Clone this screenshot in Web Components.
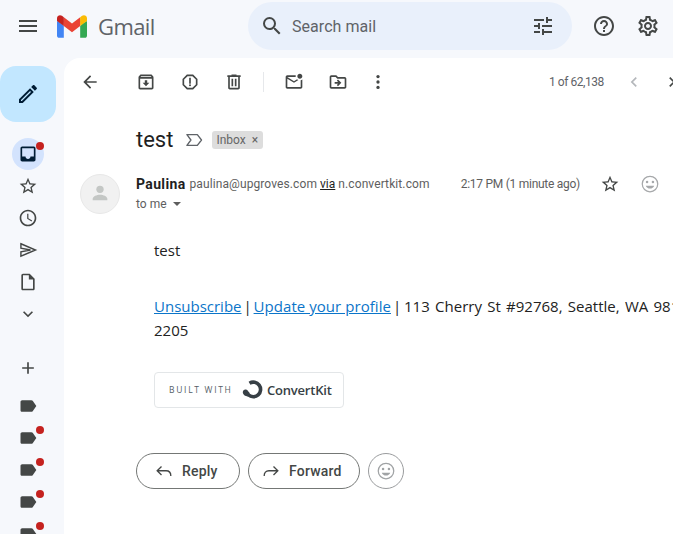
<!DOCTYPE html>
<html lang="en">
<head>
<meta charset="utf-8">
<title>Gmail</title>
<style>
  html, body { margin: 0; height: 100%; overflow: hidden; background: #f6f8fc; }
</style>
</head>
<body>
<gm-app>
  <gm-header slot="header"></gm-header>
  <gm-rail slot="rail"></gm-rail>
  <gm-toolbar slot="main"></gm-toolbar>
  <gm-message slot="main"></gm-message>
</gm-app>

<script>
const ICONS = {
  menu: '<path d="M3 18h18v-2H3v2zm0-5h18v-2H3v2zm0-7v2h18V6H3z"/>',
  search: '<path d="M15.5 14h-.79l-.28-.27A6.471 6.471 0 0 0 16 9.5 6.5 6.5 0 1 0 9.5 16c1.61 0 3.09-.59 4.23-1.57l.27.28v.79l5 4.99L20.49 19l-4.99-5zm-6 0C7.01 14 5 11.99 5 9.5S7.01 5 9.5 5 14 7.01 14 9.5 11.99 14 9.5 14z"/>',
  tune: '<path d="M3 17v2h6v-2H3zM3 5v2h10V5H3zm10 16v-2h8v-2h-8v-2h-2v6h2zM7 9v2H3v2h4v2h2V9H7zm14 4v-2H11v2h10zm-6-4h2V7h4V5h-4V3h-2v6z"/>',
  help: '<path d="M11 18h2v-2h-2v2zm1-16C6.48 2 2 6.48 2 12s4.48 10 10 10 10-4.48 10-10S17.52 2 12 2zm0 18c-4.41 0-8-3.59-8-8s3.59-8 8-8 8 3.59 8 8-3.59 8-8 8zm0-14c-2.21 0-4 1.79-4 4h2c0-1.1.9-2 2-2s2 .9 2 2c0 2-3 1.75-3 5h2c0-2.25 3-2.5 3-5 0-2.21-1.79-4-4-4z"/>',
  settings: '<path d="M19.43 12.98c.04-.32.07-.64.07-.98 0-.34-.03-.66-.07-.98l2.11-1.65c.19-.15.24-.42.12-.64l-2-3.46c-.09-.16-.26-.25-.44-.25-.06 0-.12.01-.17.03l-2.49 1c-.52-.4-1.08-.73-1.69-.98l-.38-2.65C14.46 2.18 14.25 2 14 2h-4c-.25 0-.46.18-.49.42l-.38 2.65c-.61.25-1.17.59-1.69.98l-2.49-1c-.06-.02-.12-.03-.18-.03-.17 0-.34.09-.43.25l-2 3.46c-.13.22-.07.49.12.64l2.11 1.65c-.04.32-.07.65-.07.98 0 .33.03.66.07.98l-2.11 1.65c-.19.15-.24.42-.12.64l2 3.46c.09.16.26.25.44.25.06 0 .12-.01.17-.03l2.49-1c.52.4 1.08.73 1.69.98l.38 2.65c.03.24.24.42.49.42h4c.25 0 .46-.18.49-.42l.38-2.65c.61-.25 1.17-.59 1.69-.98l2.49 1c.06.02.12.03.18.03.17 0 .34-.09.43-.25l2-3.46c.12-.22.07-.49-.12-.64l-2.11-1.65zm-1.98-1.71c.04.31.05.52.05.73 0 .21-.02.43-.05.73l-.14 1.13.89.7 1.08.84-.7 1.21-1.27-.51-1.04-.42-.9.68c-.43.32-.84.56-1.25.73l-1.06.43-.16 1.13-.2 1.35h-1.4l-.19-1.35-.16-1.13-1.06-.43c-.43-.18-.83-.41-1.23-.71l-.91-.7-1.06.43-1.27.51-.7-1.21 1.08-.84.89-.7-.14-1.13c-.03-.31-.05-.54-.05-.74s.02-.43.05-.73l.14-1.13-.89-.7-1.08-.84.7-1.21 1.27.51 1.04.42.9-.68c.43-.32.84-.56 1.25-.73l1.06-.43.16-1.13.2-1.35h1.39l.19 1.35.16 1.13 1.06.43c.43.18.83.41 1.23.71l.91.7 1.06-.43 1.27-.51.7 1.21-1.07.85-.89.7.14 1.13zM12 8c-2.21 0-4 1.79-4 4s1.79 4 4 4 4-1.79 4-4-1.79-4-4-4zm0 6c-1.1 0-2-.9-2-2s.9-2 2-2 2 .9 2 2-.9 2-2 2z"/>',
  back: '<path d="M20 11H7.83l5.59-5.59L12 4l-8 8 8 8 1.41-1.41L7.83 13H20v-2z"/>',
  archive: '<path d="M20.54 5.23l-1.39-1.68C18.88 3.21 18.47 3 18 3H6c-.47 0-.88.21-1.16.55L3.46 5.23C3.17 5.57 3 6.02 3 6.5V19c0 1.1.9 2 2 2h14c1.1 0 2-.9 2-2V6.5c0-.48-.17-.93-.46-1.27zM6.24 5h11.52l.81.97H5.44l.8-.97zM5 19V8h14v11H5zm8.45-9h-2.9v3H8l4 4 4-4h-2.55z"/>',
  report: '<path d="M15.73 3H8.27L3 8.27v7.46L8.27 21h7.46L21 15.73V8.27L15.73 3zM19 14.9L14.9 19H9.1L5 14.9V9.1L9.1 5h5.8L19 9.1v5.8z"/><circle cx="12" cy="16" r="1.2"/><path d="M11 7h2v7h-2z"/>',
  trash: '<path d="M15 4V3H9v1H4v2h1v13c0 1.1.9 2 2 2h10c1.1 0 2-.9 2-2V6h1V4h-5zm2 15H7V6h10v13zM9 8h2v9H9zm4 0h2v9h-2z"/>',
  unread: '<path d="M22 8.98V18c0 1.1-.9 2-2 2H4c-1.1 0-2-.9-2-2V6c0-1.1.9-2 2-2h10.1c-.06.32-.1.66-.1 1 0 .34.04.68.1 1H4l8 5 3.67-2.29c.47.43 1.02.76 1.63.98L12 13 4 8v10h16V9.9c.74-.15 1.42-.48 2-.92zM16 5c0 1.66 1.34 3 3 3s3-1.34 3-3-1.34-3-3-3-3 1.34-3 3z"/>',
  move: '<path d="M20 6h-8l-2-2H4c-1.1 0-2 .9-2 2v12c0 1.1.9 2 2 2h16c1.1 0 2-.9 2-2V8c0-1.1-.9-2-2-2zm0 12H4V6h5.17l2 2H20v10zm-8.01-9l-1.41 1.41L12.16 12H8v2h4.16l-1.59 1.59L11.99 17 16 13.01 11.99 9z"/>',
  more: '<circle cx="12" cy="5.5" r="2"/><circle cx="12" cy="12" r="2"/><circle cx="12" cy="18.5" r="2"/>',
  left: '<path d="M15.41 7.41 14 6l-6 6 6 6 1.41-1.41L10.83 12z"/>',
  right: '<path d="M8.59 16.59 10 18l6-6-6-6-1.41 1.41L13.17 12z"/>',
  star: '<path d="M22 9.24l-7.19-.62L12 2 9.19 8.63 2 9.24l5.46 4.73L5.82 21 12 17.27 18.18 21l-1.63-7.03L22 9.24zM12 15.4l-3.76 2.27 1-4.28-3.32-2.88 4.38-.38L12 6.1l1.71 4.04 4.38.38-3.32 2.88 1 4.28L12 15.4z"/>',
  clock: '<path d="M11.99 2C6.47 2 2 6.48 2 12s4.47 10 9.99 10C17.52 22 22 17.52 22 12S17.52 2 11.99 2zM12 20c-4.42 0-8-3.58-8-8s3.58-8 8-8 8 3.58 8 8-3.58 8-8 8zm.5-13H11v6l5.25 3.15.75-1.23-4.5-2.67z"/>',
  send: '<path d="M3.500 4.500 21 12 3.500 19.500V14.200L15 12 3.500 9.800z" fill="none" stroke="currentColor" stroke-width="1.700" stroke-linejoin="miter"/>',
  draft: '<path d="M14 2H6c-1.1 0-1.99.9-1.99 2L4 20c0 1.1.89 2 1.99 2H18c1.1 0 2-.9 2-2V8l-6-6zM6 20V4h7v5h5v11H6z"/>',
  inbox: '<path d="M19 3H5c-1.1 0-2 .9-2 2v14c0 1.1.9 2 2 2h14c1.1 0 2-.9 2-2V5c0-1.1-.9-2-2-2zm0 12h-4c0 1.66-1.35 3-3 3s-3-1.34-3-3H4.99V5H19v10z"/>',
  chevdown: '<path d="M16.59 8.59 12 13.17 7.41 8.59 6 10l6 6 6-6z"/>',
  plus: '<path d="M19 13h-6v6h-2v-6H5v-2h6V5h2v6h6v2z"/>',
  label: '<path d="M17.63 5.84C17.27 5.33 16.67 5 16 5L5 5.01C3.9 5.01 3 5.9 3 7v10c0 1.1.9 1.99 2 1.99L16 19c.67 0 1.27-.33 1.63-.84L22 12l-4.37-6.16z"/>',
  pencil: '<path d="M14.06 9.02l.92.92L5.92 19H5v-.92l9.06-9.06M17.66 3c-.25 0-.51.1-.7.29l-1.83 1.83 3.75 3.75 1.83-1.83c.39-.39.39-1.02 0-1.41l-2.34-2.34c-.2-.2-.45-.29-.71-.29zm-3.6 3.19L3 17.25V21h3.75L17.81 9.94l-3.75-3.75z"/>',
  mood: '<circle cx="15.5" cy="9.5" r="1.5"/><circle cx="8.5" cy="9.5" r="1.5"/><circle cx="12" cy="12" r="9.3" fill="none" stroke="currentColor" stroke-width="1.5"/><path d="M12 17.5c2.33 0 4.31-1.46 5.11-3.5H6.89c.8 2.04 2.78 3.5 5.11 3.5z"/>',
  marker: '<path d="M3.500 5.500h12.500l5 6.500-5 6.500H3.500l4.800-6.500z" fill="none" stroke="currentColor" stroke-width="1.6" stroke-linejoin="round"/>',
  reply: '<path d="M9 6.500 3.800 11.700 9 16.800M4 11.700h10.500c3.600 0 5.700 2.200 5.700 6.300" fill="none" stroke="currentColor" stroke-width="1.600"/>',
  forward: '<path d="M15 6.500l5.200 5.200L15 16.800M20 11.700H9.500c-3.600 0-5.700 2.200-5.700 6.300" fill="none" stroke="currentColor" stroke-width="1.600"/>',
  person: '<circle cx="12" cy="8" r="4"/><path d="M12 14c-3.600 0-8 1.800-8 4.400V20h16v-1.600c0-2.600-4.400-4.400-8-4.400z"/>'
};

class GmIcon extends HTMLElement {
  connectedCallback() {
    const size = this.getAttribute('size') || 20;
    this.attachShadow({ mode: 'open' });
    this.shadowRoot.innerHTML = `
      <style>
        :host { display: inline-flex; width: ${size}px; height: ${size}px; flex: none; }
        svg { width: 100%; height: 100%; fill: currentColor; display: block; }
      </style>
      <svg viewBox="0 0 24 24">${ICONS[this.getAttribute('name')]}</svg>
    `;
  }
}
customElements.define('gm-icon', GmIcon);

class GmApp extends HTMLElement {
  connectedCallback() {
    this.attachShadow({ mode: 'open' });
    this.shadowRoot.innerHTML = `
      <style>
        :host {
          display: flex;
          flex-direction: column;
          width: 673px;
          height: 534px;
          overflow: hidden;
          background: #f6f8fc;
          font-family: Roboto, "Liberation Sans", sans-serif;
        }
        .row { display: flex; flex: 1; min-height: 0; }
        .main {
          flex: 1;
          min-width: 0;
          background: #fff;
          border-radius: 16px 0 0 0;
          overflow: hidden;
        }
      </style>
      <slot name="header"></slot>
      <div class="row">
        <slot name="rail"></slot>
        <div class="main"><slot name="main"></slot></div>
      </div>
    `;
  }
}
customElements.define('gm-app', GmApp);

class GmHeader extends HTMLElement {
  connectedCallback() {
    this.attachShadow({ mode: 'open' });
    this.shadowRoot.innerHTML = `
      <style>
        :host {
          display: flex;
          align-items: center;
          box-sizing: border-box;
          height: 58px;
          padding-bottom: 6px;
          flex: none;
          color: #444746;
        }
        .burger { margin-left: 16px; }
        .logo { display: flex; align-items: center; margin-left: 17px; width: 191px; }
        .logo svg { width: 30px; height: 23px; display: block; }
        .logo span { margin-left: 11px; font: 400 22px/1 "Open Sans", Roboto, sans-serif; color: #5f6368; letter-spacing: -.6px; }
        .search {
          display: flex;
          align-items: center;
          width: 324px;
          height: 48px;
          border-radius: 24px;
          background: #e9f0fb;
          box-sizing: border-box;
          padding: 0 17px 0 12px;
        }
        .search .txt { flex: 1; margin-left: 8px; font-size: 16px; color: #5f6368; letter-spacing: .05px; }
        .help { margin-left: 20px; }
        .gear { margin-left: 20px; }
      </style>
      <gm-icon class="burger" name="menu" size="24"></gm-icon>
      <div class="logo">
        <svg viewBox="0 0 256 193">
          <path fill="#4285F4" d="M58.182 192.05V93.14L27.507 65.077 0 49.504v125.091c0 9.658 7.825 17.455 17.455 17.455h40.727z"/>
          <path fill="#34A853" d="M197.818 192.05h40.727c9.658 0 17.455-7.826 17.455-17.455V49.505l-31.156 17.837-27.026 25.798v98.91z"/>
          <path fill="#EA4335" d="M58.182 93.14l-4.174-38.647 4.174-36.989L128 69.868l69.818-52.364 4.67 34.992-4.67 40.644L128 145.504z"/>
          <path fill="#FBBC04" d="M197.818 17.504V93.14L256 49.504V26.231c0-21.585-24.64-33.89-41.89-20.945l-16.292 12.218z"/>
          <path fill="#C5221F" d="M0 49.504l26.759 20.07L58.182 93.14V17.504L41.89 5.286C24.61-7.66 0 4.646 0 26.23v23.273z"/>
        </svg>
        <span>Gmail</span>
      </div>
      <div class="search">
        <gm-icon name="search" size="24"></gm-icon>
        <span class="txt">Search mail</span>
        <gm-icon name="tune" size="24"></gm-icon>
      </div>
      <gm-icon class="help" name="help" size="24"></gm-icon>
      <gm-icon class="gear" name="settings" size="24"></gm-icon>
    `;
  }
}
customElements.define('gm-header', GmHeader);

class GmRailItem extends HTMLElement {
  connectedCallback() {
    this.attachShadow({ mode: 'open' });
    const dot = this.hasAttribute('dot') ? '<i class="dot"></i>' : '';
    this.shadowRoot.innerHTML = `
      <style>
        :host {
          display: flex;
          align-items: center;
          justify-content: center;
          position: relative;
          width: 32px;
          height: 32px;
          margin-left: 12px;
          border-radius: 50%;
          flex: none;
          color: #444746;
        }
        :host([active]) { background: #d3e3fd; color: #001d35; }
        .dot {
          position: absolute;
          top: 4px;
          right: 0;
          width: 8px;
          height: 8px;
          border-radius: 50%;
          background: #c5221f;
        }
      </style>
      <gm-icon name="${this.getAttribute('name')}" size="20"></gm-icon>
      ${dot}
    `;
  }
}
customElements.define('gm-rail-item', GmRailItem);

class GmRail extends HTMLElement {
  connectedCallback() {
    this.attachShadow({ mode: 'open' });
    this.shadowRoot.innerHTML = `
      <style>
        :host {
          display: flex;
          flex-direction: column;
          width: 64px;
          flex: none;
          padding-top: 8px;
          box-sizing: border-box;
          overflow: hidden;
        }
        .compose {
          display: flex;
          align-items: center;
          justify-content: center;
          width: 56px;
          height: 56px;
          flex: none;
          margin-bottom: 16px;
          border-radius: 16px;
          background: #c2e7ff;
          color: #001d35;
        }
        .gap-plus { margin-top: 22px; }
        .gap-label { margin-top: 6px; }
      </style>
      <div class="compose"><gm-icon name="pencil" size="24"></gm-icon></div>
      <gm-rail-item name="inbox" active dot></gm-rail-item>
      <gm-rail-item name="star"></gm-rail-item>
      <gm-rail-item name="clock"></gm-rail-item>
      <gm-rail-item name="send"></gm-rail-item>
      <gm-rail-item name="draft"></gm-rail-item>
      <gm-rail-item name="chevdown"></gm-rail-item>
      <gm-rail-item class="gap-plus" name="plus"></gm-rail-item>
      <gm-rail-item class="gap-label" name="label"></gm-rail-item>
      <gm-rail-item name="label" dot></gm-rail-item>
      <gm-rail-item name="label" dot></gm-rail-item>
      <gm-rail-item name="label" dot></gm-rail-item>
      <gm-rail-item name="label" dot></gm-rail-item>
    `;
  }
}
customElements.define('gm-rail', GmRail);

class GmToolbar extends HTMLElement {
  connectedCallback() {
    this.attachShadow({ mode: 'open' });
    this.shadowRoot.innerHTML = `
      <style>
        :host {
          display: flex;
          align-items: center;
          height: 48px;
          width: 640px;
          color: #444746;
        }
        .btn { display: flex; align-items: center; justify-content: center; width: 44px; height: 40px; flex: none; }
        .back { width: 40px; margin-left: 6px; }
        .archive { margin-left: 14px; }
        .sep { width: 1px; height: 20px; margin: 0 8px 0 7px; background: #e6e8eb; flex: none; }
        .more { width: 36px; }
        .count { margin-left: 153px; font-size: 12px; letter-spacing: -.45px; color: #5f6368; white-space: nowrap; width: 56px; flex: none; }
        .prev { margin-left: 9px; width: 40px; color: #b4b7bb; }
        .next { width: 36px; color: #444746; }
      </style>
      <div class="btn back"><gm-icon name="back" size="20"></gm-icon></div>
      <div class="btn archive"><gm-icon name="archive" size="20"></gm-icon></div>
      <div class="btn"><gm-icon name="report" size="20"></gm-icon></div>
      <div class="btn"><gm-icon name="trash" size="20"></gm-icon></div>
      <div class="sep"></div>
      <div class="btn"><gm-icon name="unread" size="20"></gm-icon></div>
      <div class="btn"><gm-icon name="move" size="20"></gm-icon></div>
      <div class="btn more"><gm-icon name="more" size="20"></gm-icon></div>
      <div class="count">1 of 62,138</div>
      <div class="btn prev"><gm-icon name="left" size="20"></gm-icon></div>
      <div class="btn next"><gm-icon name="right" size="20"></gm-icon></div>
    `;
  }
}
customElements.define('gm-toolbar', GmToolbar);

class GmMessage extends HTMLElement {
  connectedCallback() {
    this.attachShadow({ mode: 'open' });
    this.shadowRoot.innerHTML = `
      <style>
        :host { display: block; color: #1f1f1f; }
        .subject { display: flex; align-items: center; height: 36px; margin: 16px 0 0 72px; }
        .subject h1 { margin: 0; font: 400 22px/28px Roboto, sans-serif; color: #1f1f1f; }
        .marker { margin-left: 11px; color: #5f6368; }
        .chip {
          display: flex;
          align-items: center;
          height: 18px;
          margin-left: 8px;
          padding: 0 5px 0 4px;
          border-radius: 3px;
          background: #dddddd;
          color: #666;
          font-size: 12px;
        }
        .chip b { font-weight: 400; margin-left: 6px; }
        .head { display: flex; margin: 16px 0 0 16px; gap: 16px; height: 40px; }
        .avatar {
          display: flex;
          align-items: flex-end;
          justify-content: center;
          box-sizing: border-box;
          width: 40px;
          height: 40px;
          flex: none;
          border-radius: 50%;
          background: #f1f1f1;
          border: 1px solid #e8e8e8;
          color: #c4c7c5;
          padding-bottom: 9px;
        }
        .meta { flex: 1; min-width: 0; }
        .line { display: flex; align-items: center; height: 20px; font-size: 12px; color: #5e5e5e; white-space: nowrap; }
        .name { font-size: 14px; font-weight: 700; letter-spacing: .35px; color: #1f1f1f; margin-right: 4px; }
        .email { letter-spacing: .1px; }
        .via { color: #1f1f1f; text-decoration: underline; margin: 0 3px 0 3px; }
        .domain { letter-spacing: .1px; }
        .time { margin-left: auto; letter-spacing: -.27px; }
        .star { margin-left: 20px; color: #444746; }
        .react { margin-left: 20px; margin-right: 13px; color: #a6a8aa; }
        .caret {
          width: 0; height: 0;
          margin-left: 6px;
          border: 4px solid transparent;
          border-top: 4px solid #5e5e5e;
          border-bottom: 0;
        }
        .body {
          width: 540px;
          margin: 24px 0 0 90px;
          font: 400 15px/24px "Open Sans", sans-serif;
          color: #222;
        }
        .body p { margin: 0; white-space: nowrap; }
        .links { margin-top: 32px !important; }
        .bar { margin: 0 -2px; }
        .bar.last { margin-right: -1px; }
        .profile { letter-spacing: .05px; }
        .addr { word-spacing: 1.4px; }
        a { color: #0b75c9; text-decoration: underline; }
        .built {
          display: flex;
          align-items: center;
          box-sizing: border-box;
          width: 190px;
          height: 36px;
          margin: 30px 0 0 90px;
          padding-left: 14px;
          border: 1px solid #e3e6e8;
          border-radius: 4px;
        }
        .built small { font: 400 8.500px/1 "Open Sans", sans-serif; letter-spacing: 1.700px; color: #555e66; width: 73px; white-space: nowrap; }
        .built svg { width: 22px; height: 22px; display: block; flex: none; }
        .built span { margin-left: 3px; font: 600 13px/1 "Open Sans", sans-serif; color: #373f45; letter-spacing: -.2px; white-space: nowrap; }
        .actions { display: flex; gap: 8px; margin: 45px 0 0 72px; }
        .pill {
          display: flex;
          align-items: center;
          box-sizing: border-box;
          height: 36px;
          border: 1px solid #747775;
          border-radius: 18px;
          font-size: 14px;
          font-weight: 500;
          letter-spacing: .2px;
          color: #444746;
        }
        .reply { width: 104px; padding-left: 17px; }
        .fwd { width: 112px; padding-left: 12px; }
        .pill span { margin-left: 8px; }
        .emoji { width: 36px; justify-content: center; color: #a0a3a5; border-color: #9a9c9e; }
      </style>
      <div class="subject">
        <h1>test</h1>
        <gm-icon class="marker" name="marker" size="20"></gm-icon>
        <div class="chip">Inbox<b>×</b></div>
      </div>
      <div class="head">
        <div class="avatar"><gm-icon name="person" size="22"></gm-icon></div>
        <div class="meta">
          <div class="line">
            <span class="name">Paulina</span>
            <span class="email">paulina@upgroves.com</span>
            <span class="via">via</span>
            <span class="domain">n.convertkit.com</span>
            <span class="time">2:17 PM (1 minute ago)</span>
            <gm-icon class="star" name="star" size="20"></gm-icon>
            <gm-icon class="react" name="mood" size="20"></gm-icon>
          </div>
          <div class="line"><span>to me</span><i class="caret"></i></div>
        </div>
      </div>
      <div class="body">
        <p>test</p>
        <p class="links"><a href="#">Unsubscribe</a> <span class="bar">|</span> <a class="profile" href="#">Update your profile</a> <span class="bar last">|</span> <span class="addr">113 Cherry St #92768, Seattle, WA 98103-</span></p>
        <p>2205</p>
      </div>
      <div class="built">
        <small>BUILT WITH</small>
        <svg viewBox="0 0 22 22">
          <path d="M7.500 4.200A7.300 7.300 0 1 1 6.300 15.800" fill="none" stroke="#373f45" stroke-width="3.600"/>
          <path d="M.8 13.300c0-2 1.700-3.200 3.300-2.700 1.500.5 2.200 2 3.200 3 1 1.200.3 3.900-1.300 3.900-2.800 0-5.200-2-5.200-4.200z" fill="#373f45"/>
        </svg>
        <span>ConvertKit</span>
      </div>
      <div class="actions">
        <div class="pill reply"><gm-icon name="reply" size="20"></gm-icon><span>Reply</span></div>
        <div class="pill fwd"><gm-icon name="forward" size="20"></gm-icon><span>Forward</span></div>
        <div class="pill emoji"><gm-icon name="mood" size="20"></gm-icon></div>
      </div>
    `;
  }
}
customElements.define('gm-message', GmMessage);
</script>
</body>
</html>
